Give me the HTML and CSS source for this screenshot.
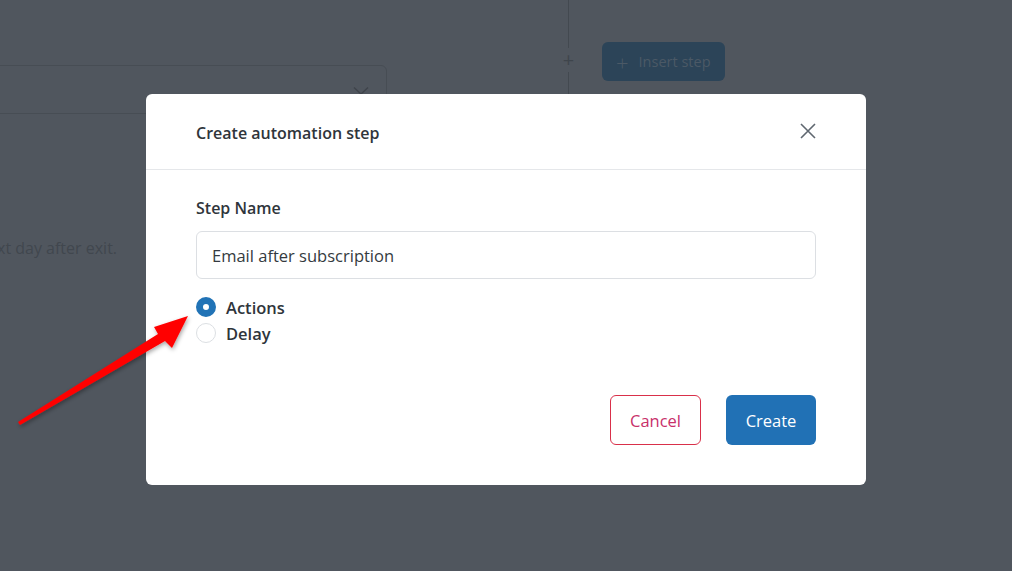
FILE: index.html
```html
<!DOCTYPE html>
<html>
<head>
<meta charset="utf-8">
<link rel="stylesheet" href="styles.css">
</head>
<body>
<div class="page">
  <div class="bg-select">
    <svg class="chev" width="16" height="10" viewBox="0 0 16 10"><path d="M1 1.5 L8 8 L15 1.5" fill="none" stroke="#3f444b" stroke-width="1.4"/></svg>
  </div>
  <div class="bg-text">xt day after exit.</div>
  <div class="flow">
    <div class="vline top"></div>
    <div class="plus">+</div>
    <div class="vline bottom"></div>
  </div>
  <div class="insert-btn"><span class="ip">+</span>Insert step</div>
</div>

<div class="modal">
  <div class="modal-header">
    <div class="modal-title">Create automation step</div>
    <svg class="close" width="16" height="16" viewBox="0 0 16 16"><path d="M1 1 L15 15 M15 1 L1 15" stroke="#5f6770" stroke-width="1.6" fill="none"/></svg>
  </div>
  <div class="modal-body">
    <label class="field-label">Step Name</label>
    <div class="input">Email after subscription</div>
    <div class="radios">
      <div class="radio-row"><span class="radio checked"></span><span class="radio-label">Actions</span></div>
      <div class="radio-row"><span class="radio"></span><span class="radio-label">Delay</span></div>
    </div>
  </div>
  <div class="modal-footer">
    <button class="btn btn-cancel">Cancel</button>
    <button class="btn btn-create">Create</button>
  </div>
</div>

<svg class="arrow" width="220" height="140" viewBox="0 0 220 140">
  <defs>
    <filter id="sh" x="-20%" y="-20%" width="140%" height="140%">
      <feDropShadow dx="1" dy="2" stdDeviation="2" flood-color="#000" flood-opacity="0.35"/>
    </filter>
  </defs>
  <polygon filter="url(#sh)" fill="#ff0000" points="18,118 158,30 154,23 188,12 172,44 165,37 20,121"/>
</svg>
</body>
</html>
```
FILE: styles.css
```css
html, body {
  margin: 0;
  padding: 0;
}
body {
  width: 1012px;
  height: 571px;
  background: #50565e;
  font-family: "Open Sans", "Noto Sans", sans-serif;
  position: relative;
  overflow: hidden;
}
.page {
  position: absolute;
  inset: 0;
}
.bg-select {
  position: absolute;
  left: -10px;
  top: 65px;
  width: 395px;
  height: 47px;
  border: 1px solid #474d54;
  border-radius: 6px;
}
.chev {
  position: absolute;
  right: 17px;
  top: 20px;
}
.bg-text {
  position: absolute;
  left: -3px;
  top: 237px;
  font-size: 16px;
  color: #41474e;
}
.flow {
  position: absolute;
  left: 560px;
  top: 0;
  width: 17px;
  display: flex;
  flex-direction: column;
  align-items: center;
}
.vline {
  width: 1px;
  background: #434950;
}
.vline.top { height: 48px; }
.vline.bottom { height: 30px; }
.plus {
  color: #3f454c;
  font-size: 20px;
  line-height: 24px;
  font-weight: 400;
}
.insert-btn {
  position: absolute;
  left: 602px;
  top: 42px;
  width: 123px;
  height: 39px;
  border-radius: 6px;
  background: #2c4458;
  color: #4b5966;
  font-size: 14.5px;
  display: flex;
  align-items: center;
  box-sizing: border-box;
  padding-left: 14px;
}
.ip {
  font-size: 22px;
  font-weight: 300;
  margin-right: 10px;
  line-height: 1;
}
.modal {
  position: absolute;
  left: 146px;
  top: 94px;
  width: 720px;
  height: 391px;
  background: #fff;
  border-radius: 6px;
  display: flex;
  flex-direction: column;
}
.modal-header {
  height: 76px;
  border-bottom: 1px solid #e5e7ea;
  box-sizing: border-box;
  display: flex;
  align-items: center;
  justify-content: space-between;
  padding: 0 50px 0 50px;
}
.modal-title {
  font-size: 16px;
  font-weight: 600;
  color: #2f353b;
  margin-top: 2px;
}
.close {
  margin-right: 0;
  margin-top: -1px;
}
.modal-body {
  padding: 26px 50px 0 50px;
}
.field-label {
  display: block;
  font-size: 16px;
  font-weight: 600;
  color: #2f353b;
  line-height: 24px;
}
.input {
  margin-top: 11px;
  height: 48px;
  box-sizing: border-box;
  border: 1px solid #dcdfe3;
  border-radius: 6px;
  padding: 0 15px;
  display: flex;
  align-items: center;
  font-size: 16.5px;
  color: #343a40;
}
.radios {
  margin-top: 15px;
  display: flex;
  flex-direction: column;
}
.radio-row {
  display: flex;
  align-items: center;
  height: 26px;
}
.radio {
  width: 20px;
  height: 20px;
  border-radius: 50%;
  border: 1px solid #dcdfe3;
  box-sizing: border-box;
  margin-right: 10px;
  background: #fff;
}
.radio.checked {
  border: 7px solid #2173b6;
  background: #fff;
}
.radio-label {
  font-size: 16.5px;
  font-weight: 600;
  color: #2f353b;
}
.modal-footer {
  margin-top: auto;
  padding: 0 50px 40px 50px;
  display: flex;
  justify-content: flex-end;
  gap: 25px;
}
.btn {
  height: 50px;
  border-radius: 6px;
  font-family: "Open Sans", "Noto Sans", sans-serif;
  font-size: 16.5px;
  padding: 0;
  cursor: pointer;
}
.btn-cancel {
  width: 91px;
  background: #fff;
  border: 1px solid #d9304a;
  color: #c8306a;
}
.btn-create {
  width: 90px;
  background: #2171b5;
  border: none;
  color: #fff;
}
.arrow {
  position: absolute;
  left: 0;
  top: 304px;
}
```
